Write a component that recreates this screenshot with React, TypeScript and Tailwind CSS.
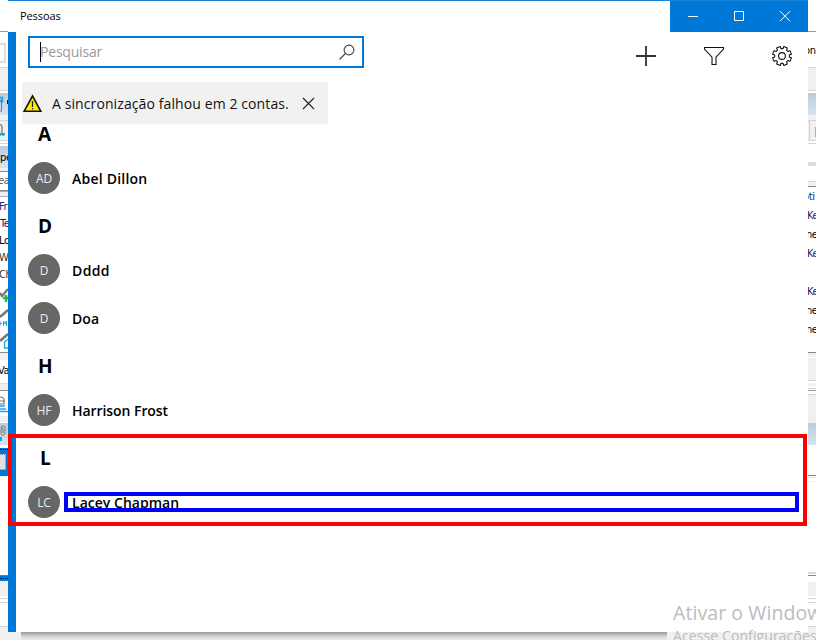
import React from "react";

const UI = "font-['Open_Sans','Noto_Sans',sans-serif]";

function Avatar({ initials }: { initials: string }) {
  return (
    <div className="flex size-8 shrink-0 items-center justify-center rounded-full bg-[#666666] pt-px text-[12px] leading-none tracking-[-0.1px] text-[#eee]">
      {initials}
    </div>
  );
}

function Contact({ initials, name, tracking }: { initials: string; name: string; tracking: string }) {
  return (
    <div className="flex h-12 items-center gap-3 pl-3">
      <Avatar initials={initials} />
      <span className={"whitespace-nowrap pt-[2px] text-[14px] font-semibold leading-5 text-black " + tracking}>{name}</span>
    </div>
  );
}

function Letter({ children }: { children: string }) {
  return <div className="h-11 pl-[22px] text-[19px] font-bold leading-[40px] text-black">{children}</div>;
}

function BackText({ children, className }: { children: string; className: string }) {
  return (
    <div className={"shrink-0 overflow-hidden whitespace-nowrap font-['DejaVu_Sans_Condensed','DejaVu_Sans',sans-serif] text-[11px] tracking-[-0.4px] " + className}>
      {children}
    </div>
  );
}

function LeftStrip() {
  return (
    <div className="flex h-[640px] w-2 shrink-0 flex-col overflow-hidden bg-white">
      <div className="h-8 shrink-0 border-b border-[#999]" />
      <div className="h-[35px] shrink-0 pt-[11px]">
        <div className="h-5 w-1.5 border-2 border-l-0 border-[#dedede]" />
      </div>
      <div className="h-6 shrink-0 border-y border-[#d5d5d5] bg-[#f0f0f0]" />
      <div className="mt-[2px] flex h-[22px] shrink-0 bg-gradient-to-b from-[#bdccdc] to-[#d5e3f1]">
        <svg width="8" height="22" viewBox="0 0 8 22" fill="none">
          <path d="M1.5 8v10M0 18h2" stroke="#777" />
          <path d="M0 9L2.5 5M0 4.5h2.5v5" stroke="#18a7e7" strokeWidth="1.5" />
          <path d="M7.5 7v4" stroke="#222" />
        </svg>
      </div>
      <div className="h-1.5 shrink-0 border-b border-[#d5d5d5] bg-[#f0f0f0]" />
      <div className="h-5 shrink-0 border-b border-[#d5d5d5] bg-[#f0f0f0]">
        <svg width="8" height="19" viewBox="0 0 8 19" fill="none">
          <path d="M0 4q2-1 2 3v5" stroke="#777" strokeWidth="1.3" />
          <path d="M0 13h5M0 15v-2M3 15v-2" stroke="#18a7e7" strokeWidth="1.8" />
        </svg>
      </div>
      <div className="mt-[2px] h-px shrink-0 bg-[#d5d5d5]" />
      <BackText className="mt-[2px] h-[22px] bg-gradient-to-b from-[#bdccdc] to-[#d5e3f1] leading-6">pe</BackText>
      <div className="h-[3px] shrink-0 bg-[#f0f0f0]" />
      <BackText className="-ml-[2px] h-5 border-y border-[#888] italic leading-[18px] text-[#555]">ea</BackText>
      <div className="h-[6px] shrink-0 border-y border-[#aaa] bg-[#f0f0f0]" />
      <BackText className="-ml-px mt-[1px] h-[17px] leading-[17px] text-[#191970]">Fr</BackText>
      <BackText className="h-[17px] leading-[17px] text-[#191970]">Te</BackText>
      <BackText className="-ml-px h-[17px] leading-[17px]">Lo</BackText>
      <BackText className="-ml-px h-[17px] leading-[17px] text-[#333]">W</BackText>
      <BackText className="-ml-px h-[17px] leading-[17px] text-[#333]">Ch</BackText>
      <svg width="8" height="69" viewBox="0 283 8 69" className="shrink-0" fill="none">
        <path d="M0 293l2 3 6-7" stroke="#777" strokeWidth="2.3" />
        <path d="M3 298h5M6 295v7" stroke="#18c427" strokeWidth="2.5" />
        <path d="M0 317l8-7M0 341l8-7" stroke="#777" strokeWidth="2.5" />
        <path d="M0 321v5M0 323.500h2M3.500 326v-5l1.500 3 1.500-3v5" stroke="#18a7e7" />
        <path d="M4.500 348v-6l3.500-3M4 348h4" stroke="#18a7e7" strokeWidth="1.3" />
      </svg>
      <div className="h-2 shrink-0 border-t border-[#888] bg-[#f0f0f0]" />
      <BackText className="-ml-[2px] h-[24px] border-b border-[#ddd] leading-[22px]">Va</BackText>
      <div className="h-[6px] shrink-0 bg-[#f0f0f0]" />
      <div className="h-px shrink-0 bg-[#888]" />
      <svg width="8" height="25" viewBox="0 391 8 25" className="shrink-0" fill="none">
        <path d="M0 397q4 0 4 3v4H0M0 401h5" stroke="#777" strokeWidth="1.2" />
        <path d="M0 406h5M0 409h6M0 411.5h8" stroke="#18a7e7" strokeWidth="1.7" />
      </svg>
      <div className="h-[6px] shrink-0 bg-[#f0f0f0]" />
      <div className="mt-px h-[22px] shrink-0 bg-gradient-to-b from-[#bdccdc] to-[#d5e3f1]">
        <svg width="8" height="22" viewBox="0 0 8 22" fill="none">
          <path d="M1 5V4q2-2 4 0v7q-2 3-4 0V6q1-2 2 0v4" stroke="#777" />
          <path d="M0 14h2v4H0" fill="#18a7e7" />
        </svg>
      </div>
      <div className="mt-[3px] h-7 shrink-0 bg-[#0078d7] pt-px">
        <div className="h-px border-t border-dotted border-[#001830]" />
        <div className="mt-1 h-4 w-1.5 border-y border-r border-[#aaa] bg-[#e1e1e1]" />
      </div>
      <div className="mt-[99px] h-[6px] shrink-0 border-t border-[#777] bg-[#0078d7] pt-[2px]">
        <div className="h-px border-t border-dotted border-[#001830]" />
      </div>
      <div className="h-[15px] shrink-0 bg-[#f0f0f0]" />
      <div className="mt-[2px] h-[5px] shrink-0 border-y border-[#d5d5d5]" />
      <div className="h-[24px] shrink-0 border-b border-[#d5d5d5]" />
      <div className="grow bg-[#f0f0f0]" />
    </div>
  );
}

function RightStrip() {
  return (
    <div className="flex h-[640px] w-2 shrink-0 flex-col overflow-hidden bg-white">
      <div className="h-8 shrink-0 border-b border-[#999]" />
      <BackText className="-ml-[4px] h-[35px] leading-[37px]">on</BackText>
      <div className="h-6 shrink-0 border-y border-[#d5d5d5] bg-[#f0f0f0]" />
      <div className="mt-[2px] h-[22px] shrink-0 bg-gradient-to-b from-[#bdccdc] to-[#d5e3f1]" />
      <div className="h-1.5 shrink-0 border-b border-[#d5d5d5] bg-[#f0f0f0]" />
      <div className="flex h-5 shrink-0 border-b border-[#d5d5d5] bg-[#f0f0f0] pl-px">
        <div className="w-px bg-[#d0d0d0]" />
        <div className="ml-[5px] mt-[6px] h-[10px] w-px bg-[#6fc0ea]" />
      </div>
      <div className="mt-[2px] h-px shrink-0 bg-[#d5d5d5]" />
      <div className="mt-[18px] h-1 shrink-0 bg-[#dcdcdc]" />
      <div className="mt-[15px] h-[6px] shrink-0 border-b border-t border-b-[#858592] border-t-[#d5d5d5] bg-[#f0f0f0]" />
      <BackText className="-ml-[5px] h-[19px] leading-[20px] text-[#191970]">oti</BackText>
      <BackText className="-ml-px h-[19px] leading-[19px] text-[#191970]">Ke</BackText>
      <BackText className="-ml-[2px] h-[19px] leading-[19px]">ne</BackText>
      <BackText className="-ml-px h-[19px] leading-[19px] text-[#191970]">Ke</BackText>
      <BackText className="-ml-px mt-[19px] h-[19px] leading-[19px] text-[#191970]">Ke</BackText>
      <BackText className="-ml-[2px] h-[19px] leading-[19px]">ne</BackText>
      <BackText className="-ml-[2px] h-[19px] leading-[19px]">ne</BackText>
      <div className="mt-[13px] h-[5px] shrink-0 border-t border-[#858592] bg-[#f0f0f0]" />
      <div className="mt-px h-[23px] shrink-0 border-b border-[#d0d0d0] bg-[#f0f0f0]" />
      <div className="mt-[2px] h-[3px] shrink-0 bg-[#f0f0f0]" />
      <div className="mt-[2px] h-[3px] shrink-0 border-b border-t border-b-[#999] border-t-[#d0d0d0]" />
      <div className="mt-[3px] h-[29px] shrink-0 border-t border-[#d5d5d5] bg-[#f0f0f0]" />
      <div className="h-[22px] shrink-0 bg-gradient-to-b from-[#bdccdc] to-[#d5e3f1]" />
      <div className="mt-[30px] h-px shrink-0 bg-[#858592]" />
      <div className="mt-px h-px shrink-0 bg-[#d5e6f3]" />
      <div className="mt-[3px] h-px shrink-0 bg-[#f0f0f0]" />
      <div className="mt-[90px] h-[2px] shrink-0 bg-[#c9def2]" />
      <div className="mt-px h-px shrink-0 bg-[#858592]" />
      <div className="mt-[6px] h-[14px] shrink-0 bg-[#f0f0f0]" />
      <div className="mt-[2px] h-[5px] shrink-0 border-y border-[#d5d5d5]" />
      <div className="h-[24px] shrink-0 border-b border-[#d5d5d5]" />
      <div className="grow bg-[#f0f0f0]" />
    </div>
  );
}

function TitleBar() {
  return (
    <div className="flex h-8 shrink-0 justify-between border-t border-[#1883d7] text-[11px]">
      <span className="pl-3 leading-[29px] tracking-[-0.1px]">Pessoas</span>
      <div className="flex h-[31px] bg-[#0078d7] text-white">
        <svg width="138" height="31" viewBox="670 1 138 31" fill="none" stroke="currentColor">
          <path d="M688 16.5h10" />
          <path d="M734.5 11.5h9v9h-9z" />
          <path d="M780 11.2l10 10M790 11.2l-10 10" />
        </svg>
      </div>
    </div>
  );
}

function gearPath() {
  const pts: string[] = [];
  for (let i = 0; i < 8; i++) {
    const a = (i * Math.PI) / 4 - Math.PI / 2 + Math.PI / 8;
    [[7.4, -0.27], [9.6, -0.2], [9.6, 0.2], [7.4, 0.27]].forEach(([r, d]) => {
      pts.push(`${(782 + r * Math.cos(a + d)).toFixed(2)} ${(56 + r * Math.sin(a + d)).toFixed(2)}`);
    });
  }
  return "M" + pts.join("L") + "Z";
}

function Toolbar() {
  return (
    <div className="flex h-[50px] shrink-0 justify-between pl-3">
      <div className="mt-1 flex h-8 w-[336px] items-center border-2 border-[#0078d7] pl-[10px]">
        <span className="h-5 w-px bg-black" />
        <span className="-ml-px grow text-[14px] leading-5 tracking-[-0.2px] text-[#999]">Pesquisar</span>
        <svg width="24" height="24" viewBox="0 0 24 24" className="mr-[3px]" fill="none" stroke="#444" strokeWidth="1.1">
          <circle cx="14" cy="10" r="4.9" />
          <path d="M10.4 13.500L4.500 19.500" />
        </svg>
      </div>
      <svg width="180" height="50" viewBox="628 32 180 50" fill="none" stroke="#111" strokeWidth="1.1">
        <path d="M636 56h20M646 46v20" stroke="#333" strokeWidth="1.8" />
        <path d="M704.5 47.5h19v1.500l-7.500 8.200v7.300h-4v-7.300l-7.500-8.200z" />
        <path d={gearPath()} strokeLinejoin="round" />
        <circle cx="782" cy="56" r="3.4" />
      </svg>
    </div>
  );
}

function SyncNotice() {
  return (
    <div className="ml-1.5 flex h-[42px] w-[306px] shrink-0 items-center bg-[#f1f1f1]">
      <svg width="20" height="20" viewBox="0 0 20 20" className="ml-px shrink-0">
        <path d="M9.5 3L17.800 18.200H1.200z" fill="#ffef00" stroke="#111" strokeWidth="1.6" />
        <path d="M9.5 8v6M9.5 15v1.500" stroke="#222" strokeWidth="1.3" />
      </svg>
      <span className="ml-[9px] w-[238px] whitespace-nowrap pt-[2px] text-[14px] leading-5 tracking-[0.1px] text-[#111]">
        A sincronização falhou em 2 contas.
      </span>
      <svg width="13" height="13" viewBox="0 0 13 13" className="ml-[12px]" fill="none" stroke="#222" strokeWidth="1.1">
        <path d="M1 1l11 11M12 1L1 12" />
      </svg>
    </div>
  );
}

export default function App() {
  return (
    <div className={"relative flex h-[640px] w-[816px] overflow-hidden bg-white text-black " + UI}>
      <LeftStrip />
      <div className="flex h-[640px] w-[800px] shrink-0 flex-col">
        <TitleBar />
        <div className="flex h-[600px] shrink-0 flex-col border-l-8 border-[#0078d7]">
          <Toolbar />
          <SyncNotice />
          <div className="-mt-[10px] flex flex-col">
            <Letter>A</Letter>
            <div className="-mt-[4px]"><Contact initials="AD" name="Abel Dillon" tracking="tracking-[0.22px]" /></div>
            <div className="mt-1"><Letter>D</Letter></div>
            <div className="-mt-1"><Contact initials="D" name="Dddd" tracking="tracking-[0.37px]" /></div>
            <Contact initials="D" name="Doa" tracking="tracking-[0.1px]" />
            <div className="mt-1"><Letter>H</Letter></div>
            <div className="-mt-1"><Contact initials="HF" name="Harrison Frost" tracking="tracking-[-0.06px]" /></div>
            <div className="mt-1 pl-[2px]"><Letter>L</Letter></div>
            <div className="-mt-1"><Contact initials="LC" name="Lacey Chapman" tracking="tracking-[0.02px]" /></div>
          </div>
        </div>
        <div className="h-2 bg-[#f0f0f0] pl-[13px]">
          <div className="h-2 w-[646px] bg-gradient-to-b from-[#999] via-[#cfcfcf] to-[#ebebeb]" />
        </div>
      </div>
      <RightStrip />
      <div className="absolute left-[8px] top-[434px] h-[92px] w-[799px] border-4 border-[#ff0000]" />
      <div className="absolute left-[64px] top-[492px] h-5 w-[735px] border-4 border-[#0000ff]" />
      <div className="absolute left-[673px] top-[600px] whitespace-nowrap text-[#bcbcbc]">
        <div className="text-[19.5px] leading-[26px] tracking-[0.08px]">Ativar o Windows</div>
        <div className="text-[14px] leading-5 tracking-[0.1px]">Acesse Configurações</div>
      </div>
    </div>
  );
}
